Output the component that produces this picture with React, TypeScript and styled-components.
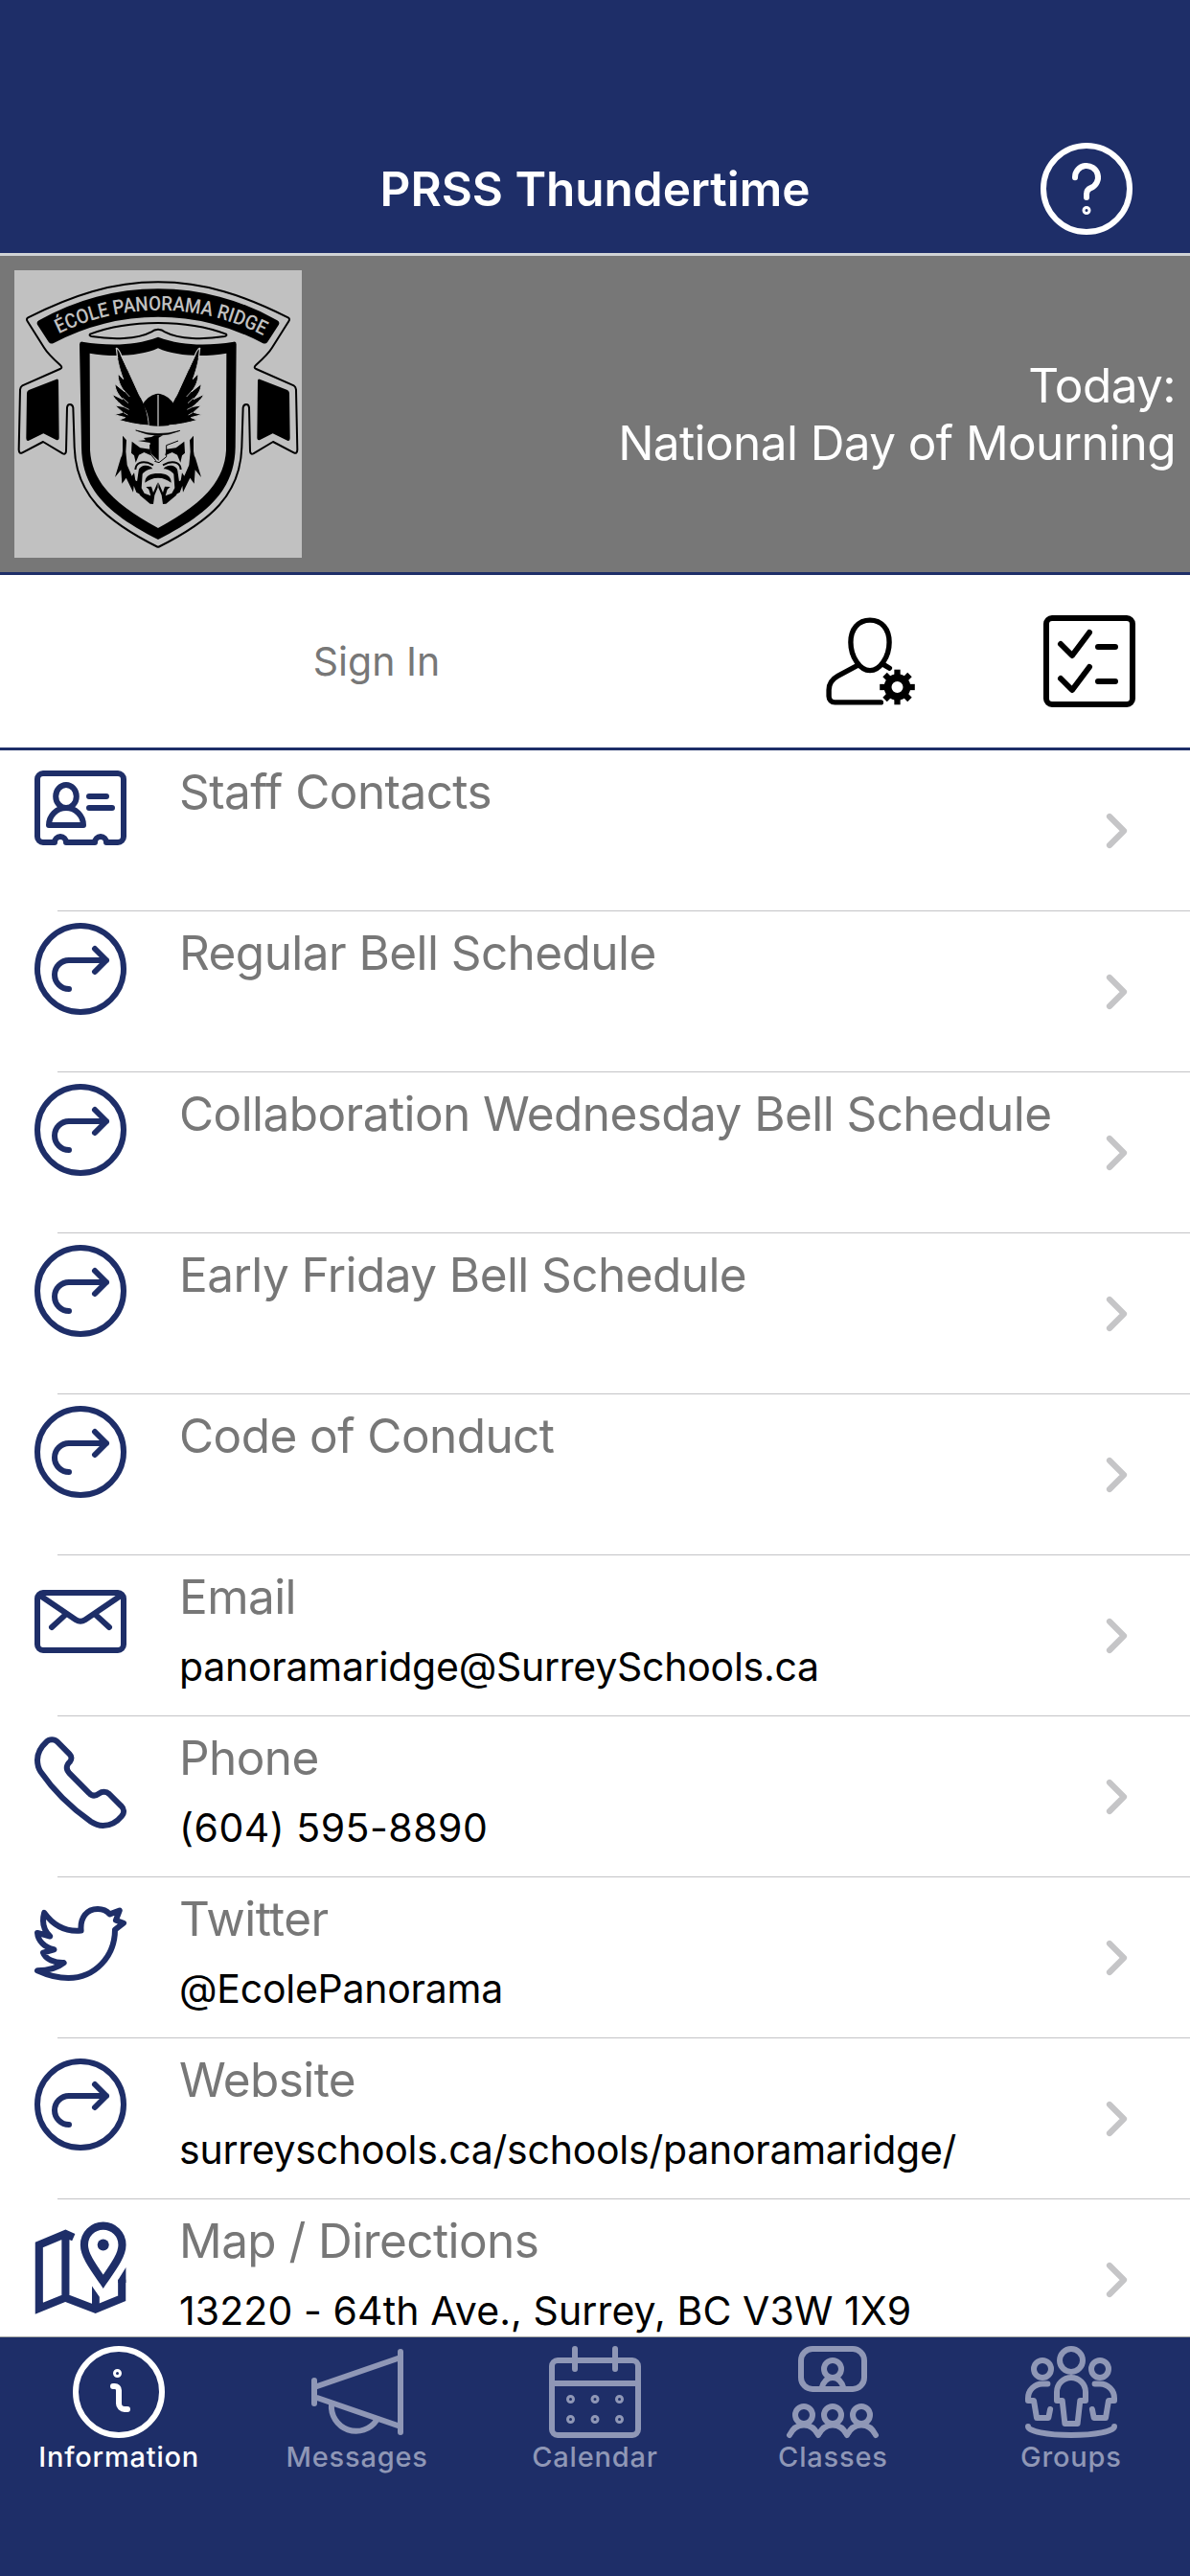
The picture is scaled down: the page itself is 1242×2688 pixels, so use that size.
import React from "react";
import styled, { createGlobalStyle } from "styled-components";

const NAVY = "#1e2e68";
const GREY = "#777777";

const GlobalStyle = createGlobalStyle`
  body {
    margin: 0;
    background: #fff;
    font-family: Inter, "Liberation Sans", sans-serif;
  }
`;

const Screen = styled.div`
  display: flex;
  flex-direction: column;
  width: 1242px;
  height: 2688px;
  overflow: hidden;
  background: #fff;
`;

const NavBar = styled.header`
  display: grid;
  grid-template-columns: 1fr auto 1fr;
  align-items: center;
  box-sizing: border-box;
  height: 267px;
  padding: 132px 60px 3px;
  border-bottom: 3px solid #d0d3d5;
  background: ${NAVY};
  color: #fff;
  flex-shrink: 0;
`;

const NavTitle = styled.h1`
  grid-column: 2;
  margin: 0;
  font-size: 49.5px;
  font-weight: 600;
  line-height: 60px;
  letter-spacing: -0.05px;
  white-space: nowrap;
`;

const HelpButton = styled.div`
  display: flex;
  justify-self: end;
`;

const Banner = styled.section`
  display: flex;
  align-items: center;
  justify-content: space-between;
  box-sizing: border-box;
  height: 333px;
  padding: 0 15px;
  border-bottom: 3px solid ${NAVY};
  background: ${GREY};
  flex-shrink: 0;
`;

const Today = styled.p`
  margin: 0;
  color: #fff;
  font-size: 49.5px;
  line-height: 60px;
  letter-spacing: -0.6px;
  text-align: right;
`;

const AccountBar = styled.section`
  display: flex;
  align-items: center;
  box-sizing: border-box;
  height: 183px;
  padding-right: 57px;
  border-bottom: 3px solid ${NAVY};
  flex-shrink: 0;
`;

const SignIn = styled.div`
  width: 786px;
  color: ${GREY};
  font-size: 41px;
  text-align: center;
`;

const AccountActions = styled.div`
  display: flex;
  flex: 1;
  justify-content: space-between;
  padding-left: 74px;
`;

const List = styled.ul`
  flex: 1;
  min-height: 0;
  margin: 0;
  padding: 0;
  overflow: hidden;
  list-style: none;
`;

const Row = styled.li`
  display: flex;
  height: 168px;
  background: linear-gradient(#c4c4c6, #c4c4c6) 60px 100% / 100% 1px no-repeat;
`;

const RowIcon = styled.div<{ $top: number }>`
  display: flex;
  align-items: flex-start;
  width: 187px;
  padding: ${({ $top }) => $top}px 0 0 36px;
  box-sizing: border-box;
  color: ${NAVY};
`;

const RowText = styled.div`
  flex: 1;
  padding-top: 13px;
  white-space: nowrap;
`;

const RowTitle = styled.div`
  color: ${GREY};
  font-size: 49.5px;
  line-height: 60px;
  letter-spacing: -0.57px;
`;

const RowDetail = styled.div<{ $tracking: number }>`
  margin-top: 18px;
  color: #000;
  font-size: 41px;
  line-height: 50px;
  letter-spacing: ${({ $tracking }) => $tracking}px;
`;

const ChevronBox = styled.div`
  display: flex;
  align-items: center;
  width: 87px;
  color: #c5c5c7;
`;

const TabBar = styled.nav`
  display: grid;
  grid-template-columns: repeat(5, 1fr);
  box-sizing: border-box;
  height: 250px;
  padding-top: 9px;
  border-top: 1px solid #a0a29e;
  background: ${NAVY};
  flex-shrink: 0;
`;

const Tab = styled.div<{ $active?: boolean }>`
  display: flex;
  flex-direction: column;
  align-items: center;
  color: ${({ $active }) => ($active ? "#fff" : "#8f97b6")};
`;

const TabLabel = styled.span`
  margin-top: 2px;
  font-size: 29px;
  font-weight: 500;
  line-height: 36px;
  letter-spacing: 0.8px;
`;

const IconSvg = styled.svg`
  display: block;
  width: 96px;
  height: 96px;
  overflow: visible;
  fill: none;
  stroke: currentColor;
  stroke-width: 2;
  stroke-linecap: round;
  stroke-linejoin: round;
`;

const ChevronSvg = styled(IconSvg)`
  width: 21px;
  height: 36px;
  stroke-width: 6.2;
`;

const LogoSvg = styled.svg`
  display: block;
  width: 300px;
  height: 300px;
  background: #c1c1c1;
`;

type IconProps = { children: React.ReactNode };

const Icon = ({ children }: IconProps) => (
  <IconSvg viewBox="0 0 32 32">{children}</IconSvg>
);

const HelpIcon = () => (
  <Icon>
    <circle cx="16" cy="16" r="15" />
    <path d="M12 12.1V12a4 4 0 1 1 5.5 3.7C16.6 16.1 16 16.8 16 17.8V19" />
    <circle cx="16" cy="23.5" r="1" strokeWidth="1" />
  </Icon>
);

const UserSettingsIcon = () => (
  <Icon>
    <g strokeWidth="1.8">
      <path d="M16 1.7c4.1 0 6.7 3.2 6.7 7.7 0 5.2-3.3 9.8-6.7 9.8s-6.7-4.6-6.7-9.8c0-4.5 2.6-7.7 6.7-7.7z" />
      <path d="M11.8 17.4 4.8 21.1C2.8 22.2 1.7 24 1.7 26v2.2c0 1.2.9 2.1 2.1 2.1H19.8" />
      <path d="M20.8 17.2l2 1.2" />
    </g>
    <circle cx="25.5" cy="25" r="3.3" strokeWidth="2.6" />
    <g strokeWidth="2.1" strokeLinecap="butt">
      {[0, 45, 90, 135, 180, 225, 270, 315].map((angle) => (
        <path
          key={angle}
          d="M25.5 21.2V18.9"
          transform={`rotate(${angle} 25.5 25)`}
        />
      ))}
    </g>
  </Icon>
);

const ChecklistIcon = () => (
  <Icon>
    <rect x="1" y="1" width="30" height="30" rx="2" />
    <path d="M6 10l4 4 6-8M19 11h6M6 22l4 4 6-8M19 23h6" />
  </Icon>
);

const ContactsIcon = () => (
  <Icon>
    <path d="M3 4h26a2 2 0 0 1 2 2v20a2 2 0 0 1-2 2h-4a2 2 0 0 0-4 0H11a2 2 0 0 0-4 0H3a2 2 0 0 1-2-2V6a2 2 0 0 1 2-2z" />
    <ellipse cx="11" cy="12" rx="3.6" ry="4" />
    <path d="M5 22a6 6 0 0 1 12 0zM19 12h6M19 16h8" />
  </Icon>
);

const LinkIcon = () => (
  <Icon>
    <circle cx="16" cy="16" r="15" />
    <path d="M12 23a5 5 0 0 1 0-10h13M21 9l4 4-4 4" />
  </Icon>
);

const EmailIcon = () => (
  <Icon>
    <rect x="1" y="6" width="30" height="20" rx="2" />
    <path d="M2 7l12.4 8.4a2.9 2.9 0 0 0 3.2 0L30 7M6 18l4.6-4.2M26 18l-4.6-4.2" />
  </Icon>
);

const PhoneIcon = () => (
  <Icon>
    <path d="M4.2 1.8C5.2.8 6.9.8 7.9 1.8L12.2 6.1C13 6.9 13 8 12.3 8.8 11 10 10.9 11.4 12 12.6L19 19.7C20 20.8 21.2 20.8 22.4 19.9 23.5 19.1 24.9 19 26 20L30.1 24.1C31.2 25.1 31.3 26.6 30.4 27.6 28.6 29.8 26.3 31 23.8 31 22.2 31 20.8 30.4 19.6 29.6 12.5 24.6 6.5 18.6 2.1 12.2 1.3 11 1 9.6 1 8.2 1 5.8 2.2 3.6 4.2 1.8z" />
  </Icon>
);

const TwitterIcon = () => (
  <Icon>
    <path d="M3.4 5.3C6.5 9.6 10.8 12 16.2 11.5 15.8 7 18.2 4 22 4c1.7 0 3.2.7 4.2 1.8l3.4-1.3-1.3 3.4 2.7 1L28 11.2C28 20.5 21 28 11.8 28 8.2 28 4.5 27 1 25.4c3.6 0 7-.9 9.2-2.7C7 22.8 3.8 21.5 3 19.2L6.8 18.1C3.5 17.5 1.2 15 1 12.3l4.4 1.2C3.3 11.5 2.5 8.6 3.4 5.3z" />
  </Icon>
);

const MapIcon = () => (
  <Icon>
    <g strokeWidth="2.7" strokeLinecap="butt" strokeLinejoin="miter">
      <path d="M13.6 6.2l-2.8-1.2-9.2 3.8v22.1l9.2-3.7 10.4 4 9.2-3.8v-6.5M10.8 5v22.2" />
      <path d="M23.9 21.6C20.3 16.4 17.3 12.4 17.3 8.8a6.6 6.6 0 0 1 13.2 0c0 3.6-3 7.6-6.6 12.8z" />
    </g>
    <g fill="currentColor" stroke="none">
      <circle cx="23.9" cy="8.8" r="2" />
      <path d="M20 23.2l2.6 3.7v4H20zM31.8 16.7V22h-2.7v-1z" />
    </g>
  </Icon>
);

const InfoIcon = () => (
  <Icon>
    <circle cx="16" cy="16" r="15" />
    <circle cx="15.5" cy="9.5" r="1" strokeWidth="1" />
    <path d="M14 14h.6c.8 0 1.4.6 1.4 1.4V20a2 2 0 0 0 2 2h1" />
  </Icon>
);

const MessagesIcon = () => (
  <Icon>
    <path d="M1 12v8M31 2v28M2 14L31 4M2 18l29 10" />
    <path d="M7 20.2a8.6 8.6 0 0 0 15.7 5.6" />
  </Icon>
);

const CalendarIcon = () => (
  <Icon>
    <rect x="1" y="5" width="30" height="26" rx="2" />
    <path d="M1 13h30M9 1v7M23 1v7" />
    {[18.5, 25.5].map((cy) =>
      [7.5, 16, 24.5].map((cx) => (
        <circle key={`${cx}-${cy}`} cx={cx} cy={cy} r="1" strokeWidth="1" />
      ))
    )}
  </Icon>
);

const ClassesIcon = () => (
  <Icon>
    <rect x="5" y="1" width="22" height="14" rx="4" />
    <circle cx="16" cy="8" r="3" />
    <path d="M12.2 14.6C12.8 12.4 14.2 11 16 11s3.2 1.4 3.8 3.6" strokeLinecap="butt" />
    <circle cx="6" cy="24" r="3" />
    <circle cx="16" cy="24" r="3" />
    <circle cx="26" cy="24" r="3" />
    <path d="M1 31c1.1-2.3 2.9-3.5 5-3.5s3.9 1.2 5 3.5c1.1-2.3 2.9-3.5 5-3.5s3.9 1.2 5 3.5c1.1-2.3 2.9-3.5 5-3.5s3.9 1.2 5 3.5" />
  </Icon>
);

const GroupsIcon = () => (
  <Icon>
    <circle cx="16" cy="5" r="4" />
    <circle cx="6" cy="8" r="3" />
    <circle cx="26" cy="8" r="3" />
    <path d="M11 19v-3a5 5 0 0 1 10 0v3h-1.9l-.9 8h-4.4l-.9-8z" />
    <path d="M7.8 13.2H6a5 5 0 0 0-5 5V19h2l1 6h4.1l.6-3" />
    <path d="M24.2 13.2H26a5 5 0 0 1 5 5V19h-2l-1 6h-4.1l-.6-3" />
    <path d="M1 28c0 1.7 6.7 3 15 3s15-1.3 15-3" />
  </Icon>
);

const Chevron = () => (
  <ChevronSvg viewBox="0 0 21 36">
    <path d="M3 3l15 15L3 33" />
  </ChevronSvg>
);

// Left half of the crest, the right half is the same drawing mirrored
const CrestHalf = () => (
  <>
    <path
      d="M495 103C350 103 225 145 88 214Q81 218 86 226L138 308Q150 328 188 362Q198 371 188 375L70 427Q64 430 63 440L59 628Q60 642 70 637L135 603 197 640Q206 644 207 632L210 496Q211 486 219 486T229 496L233 620C238 770 330 850 495 933"
      fill="none"
      stroke="#000"
      strokeWidth="6"
      strokeLinejoin="round"
    />
    <path d="M90 441L177 407Q183 405 183 413L185 592Q184 600 176 597L136 577 90 599Q82 602 82 592L84 450Q85 444 90 441z" />
    {/* wing */}
    <path
      d="M364 309C372 315 376 322 380 333L437 458C452 480 464 515 466 552C430 550 400 543 372 535L392 527 358 518 384 511 360 489 386 493C372 480 356 468 353 455L384 470C370 455 360 440 360 422L390 446C376 428 368 408 370 390L386 407C372 370 366 340 364 309z"
      stroke="#c1c1c1"
      strokeWidth="3"
    />
    <path d="M386 440l20 22M384 466l18 16M384 492l20 10M386 511l14 8" stroke="#c1c1c1" strokeWidth="2.5" />
    {/* hair and beard */}
    <path d="M384 584l12 14-2 36 4 42 15 34 7-10 4 24 8 4 8 40-13-7-8-20-2 20-22-45-13 18-3-43-19 23 18-60 4-8 2-14z" />
    <path d="M413 602l26 20 30 4 4 20-22-10-16 8-10 24-5-22-9-8z" />
    <path
      d="M424 690C425 668 444 664 462 668L480 676"
      fill="none"
      stroke="#000"
      strokeWidth="6"
    />
    <path d="M434 694C436 674 470 672 478 688C464 688 452 696 446 704L443 748 452 764 472 772 466 752 457 744 474 743 480 762 494 730 494 746 484 770 480 798 470 797 438 770 428 735z" />
    <path d="M454 731C454 708 472 702 495 702V716C478 716 466 722 454 731z" />
  </>
);

const SchoolLogo = () => (
  <LogoSvg viewBox="45 66 900 900">
    <defs>
      <path id="banner-arc" d="M184 265A707 707 0 0 1 822 270" />
    </defs>
    <CrestHalf />
    <g transform="translate(990 0) scale(-1 1)">
      <CrestHalf />
    </g>
    <path d="M122 223A751 751 0 0 1 868 223Q877 228 873 236L838 290Q832 299 822 294A696 696 0 0 0 168 294Q158 299 152 290L117 236Q113 228 122 223z" />
    <text
      fill="#c1c1c1"
      fontFamily="Roboto, sans-serif"
      fontSize="63"
      fontWeight="500"
    >
      <textPath href="#banner-arc" textLength="664" lengthAdjust="spacingAndGlyphs">
        ÉCOLE PANORAMA RIDGE
      </textPath>
    </text>
    <path
      d="M282 266C350 240 420 231 495 231S640 240 708 266Q712 271 704 273C640 283 560 283 518 260Q495 242 472 260C430 283 350 283 286 273Q278 271 282 266z"
      fill="none"
      stroke="#000"
      strokeWidth="6"
    />
    {/* shield */}
    <path
      fillRule="evenodd"
      d="M258 290C340 303 420 303 495 275C570 303 650 303 732 290Q740 288 740 298L737 620C735 760 640 835 495 909C350 835 257 760 255 620L249 298Q250 288 258 290zM281 326L282 630C288 730 360 800 495 873C630 800 702 730 708 630L709 326C640 338 550 336 495 310C440 336 350 338 281 326z"
    />
    <path
      d="M364 309C370 312 376 322 380 333L400 376M626 309C620 312 614 322 610 333L590 376M364 309L368 342M626 309L622 342"
      fill="none"
      stroke="#c1c1c1"
      strokeWidth="4"
    />
    <path d="M447 485C462 462 478 454 495 452C512 454 530 462 545 485C534 505 530 525 529 552Q495 556 467 552C466 525 460 505 447 485z" />
    <path d="M495 456V554" stroke="#c1c1c1" strokeWidth="4" />
    <path d="M425 567Q495 598 564 568Q495 588 425 567z" stroke="#000" strokeWidth="2" />
    <path d="M432 600L456 598 450 591 474 588 484 583H510L497 590V662L472 640 470 606z" />
    <path d="M484 664L498 668 521 650V614L558 600M470 612V640L488 662" fill="none" stroke="#000" strokeWidth="3" />
  </LogoSvg>
);

type RowItem = {
  title: string;
  detail?: string;
  tracking?: number;
  icon: React.ComponentType;
};

const rows: RowItem[] = [
  { title: "Staff Contacts", icon: ContactsIcon },
  { title: "Regular Bell Schedule", icon: LinkIcon },
  { title: "Collaboration Wednesday Bell Schedule", icon: LinkIcon },
  { title: "Early Friday Bell Schedule", icon: LinkIcon },
  { title: "Code of Conduct", icon: LinkIcon },
  { title: "Email", detail: "panoramaridge@SurreySchools.ca", icon: EmailIcon },
  { title: "Phone", detail: "(604) 595-8890", tracking: 0.5, icon: PhoneIcon },
  { title: "Twitter", detail: "@EcolePanorama", icon: TwitterIcon },
  {
    title: "Website",
    detail: "surreyschools.ca/schools/panoramaridge/",
    icon: LinkIcon,
  },
  {
    title: "Map / Directions",
    detail: "13220 - 64th Ave., Surrey, BC V3W 1X9",
    tracking: 0.1,
    icon: MapIcon,
  },
];

const tabs = [
  { label: "Information", icon: InfoIcon },
  { label: "Messages", icon: MessagesIcon },
  { label: "Calendar", icon: CalendarIcon },
  { label: "Classes", icon: ClassesIcon },
  { label: "Groups", icon: GroupsIcon },
];

const InfoRow = ({ title, detail, tracking = -0.25, icon: RowGlyph }: RowItem) => (
  <Row>
    <RowIcon $top={detail ? 21 : 12}>
      <RowGlyph />
    </RowIcon>
    <RowText>
      <RowTitle>{title}</RowTitle>
      {detail && <RowDetail $tracking={tracking}>{detail}</RowDetail>}
    </RowText>
    <ChevronBox>
      <Chevron />
    </ChevronBox>
  </Row>
);

const App = () => (
  <>
    <GlobalStyle />
    <Screen>
      <NavBar>
        <NavTitle>PRSS Thundertime</NavTitle>
        <HelpButton>
          <HelpIcon />
        </HelpButton>
      </NavBar>
      <Banner>
        <SchoolLogo />
        <Today>
          Today:
          <br />
          National Day of Mourning
        </Today>
      </Banner>
      <AccountBar>
        <SignIn>Sign In</SignIn>
        <AccountActions>
          <UserSettingsIcon />
          <ChecklistIcon />
        </AccountActions>
      </AccountBar>
      <List>
        {rows.map((row) => (
          <InfoRow key={row.title} {...row} />
        ))}
      </List>
      <TabBar>
        {tabs.map(({ label, icon: TabGlyph }, index) => (
          <Tab key={label} $active={index === 0}>
            <TabGlyph />
            <TabLabel>{label}</TabLabel>
          </Tab>
        ))}
      </TabBar>
    </Screen>
  </>
);

export default App;
